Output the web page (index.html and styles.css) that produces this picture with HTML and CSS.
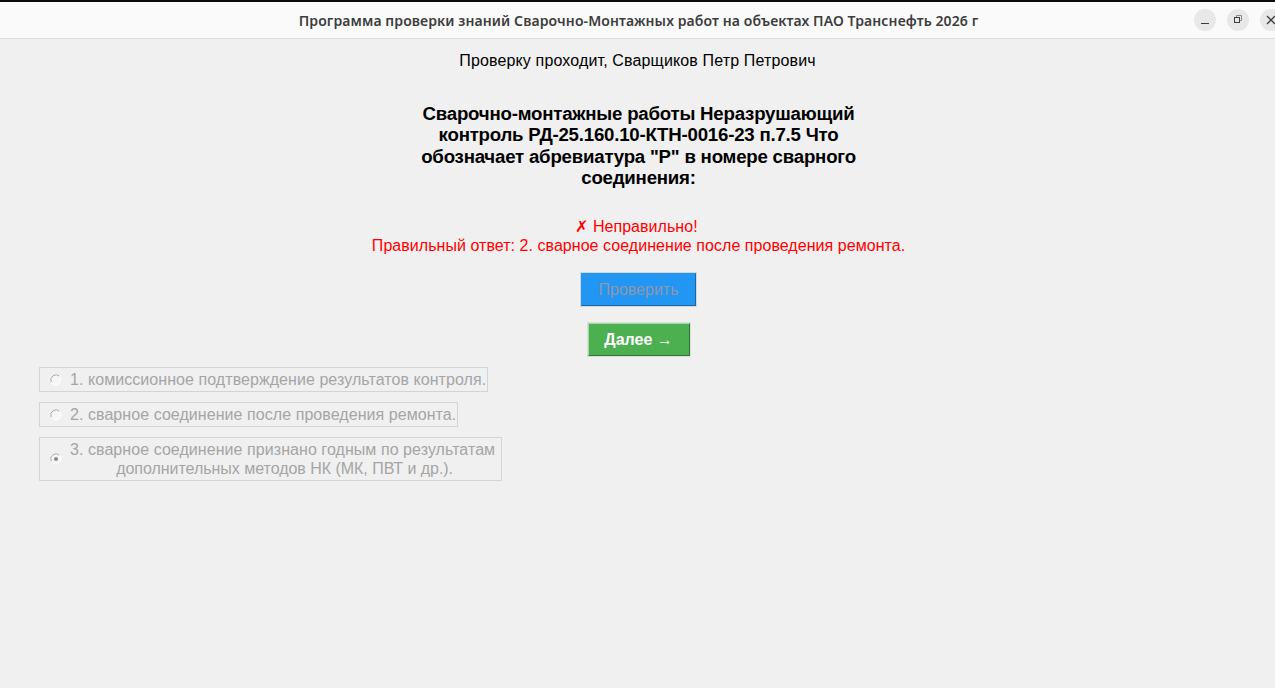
FILE: index.html
```html
<!DOCTYPE html>
<html lang="ru">
<head>
<meta charset="utf-8">
<title>Программа проверки знаний</title>
<link rel="stylesheet" href="styles.css">
</head>
<body>
<div class="window">
  <header class="titlebar">
    <div class="title">Программа проверки знаний Сварочно-Монтажных работ на объектах ПАО Транснефть 2026 г</div>
    <div class="controls">
      <span class="ctl"><svg width="24" height="24" viewBox="0 0 24 24"><path d="M8 15.5h8" stroke="#3d3d3d" stroke-width="1" fill="none"/></svg></span>
      <span class="ctl"><svg width="24" height="24" viewBox="0 0 24 24"><path d="M10.5 9V7.5h5v5H14" stroke="#8a8a8a" stroke-width="1" fill="none"/><rect x="8.5" y="9.5" width="5" height="5" stroke="#3d3d3d" stroke-width="1" fill="none"/></svg></span>
      <span class="ctl"><svg width="24" height="24" viewBox="0 0 24 24"><path d="M8 8l8 8M16 8l-8 8" stroke="#3d3d3d" stroke-width="1.3" fill="none"/></svg></span>
    </div>
  </header>
  <main class="content">
    <div class="user">Проверку проходит, Сварщиков Петр Петрович</div>
    <h1 class="question">Сварочно-монтажные работы Неразрушающий контроль РД-25.160.10-КТН-0016-23 п.7.5 Что обозначает абревиатура "Р" в номере сварного соединения:</h1>
    <div class="result"><span class="verdict">✗ Неправильно!</span>Правильный ответ: 2. сварное соединение после проведения ремонта.</div>
    <button class="btn btn-check" disabled>Проверить</button>
    <button class="btn btn-next">Далее →</button>
    <div class="options">
      <label class="option">
        <svg class="radio" width="12" height="12" viewBox="0 0 12 12"><circle cx="6" cy="6" r="5.5" fill="#f6f6f6"/><path d="M1.2 8A5.2 5.2 0 0 1 9.5 2.2" stroke="#a9a9a9" fill="none"/><path d="M9.5 2.2A5.2 5.2 0 0 1 2.5 9.8" stroke="#ffffff" fill="none"/></svg>
        <span>1. комиссионное подтверждение результатов контроля.</span>
      </label>
      <label class="option">
        <svg class="radio" width="12" height="12" viewBox="0 0 12 12"><circle cx="6" cy="6" r="5.5" fill="#f6f6f6"/><path d="M1.2 8A5.2 5.2 0 0 1 9.5 2.2" stroke="#a9a9a9" fill="none"/><path d="M9.5 2.2A5.2 5.2 0 0 1 2.5 9.8" stroke="#ffffff" fill="none"/></svg>
        <span>2. сварное соединение после проведения ремонта.</span>
      </label>
      <label class="option option-wide">
        <svg class="radio" width="12" height="12" viewBox="0 0 12 12"><circle cx="6" cy="6" r="5.5" fill="#f6f6f6"/><path d="M1.2 8A5.2 5.2 0 0 1 9.5 2.2" stroke="#a9a9a9" fill="none"/><path d="M9.5 2.2A5.2 5.2 0 0 1 2.5 9.8" stroke="#ffffff" fill="none"/><circle cx="6" cy="6" r="2" fill="#8a8a8a"/></svg>
        <span>3. сварное соединение признано годным по результатам<span class="line-two">дополнительных методов НК (МК, ПВТ и др.).</span></span>
      </label>
    </div>
  </main>
</div>
</body>
</html>
```
FILE: styles.css
```css
* { box-sizing: border-box; }
html, body { margin: 0; height: 100%; overflow: hidden; }
body { font-family: "Liberation Sans", Arial, sans-serif; font-size: 16px; background: #f0f0f0; color: #000; }
.window { height: 688px; display: flex; flex-direction: column; }
.titlebar {
  height: 39px; flex: none; display: flex; align-items: center; justify-content: center; position: relative;
  background: #fafafa; border-top: 2px solid #0c0c0c; border-bottom: 1px solid #dcdcdc; padding-left: 2px;
}
.title { font-family: "Noto Sans", sans-serif; font-weight: 600; font-size: 14px; letter-spacing: 0.1px; color: #3d3d3d; white-space: nowrap; }
.controls { position: absolute; left: 1194px; top: 7px; display: flex; gap: 11px; }
.ctl { width: 22px; height: 22px; border-radius: 50%; background: #e8e8e8; display: flex; align-items: center; justify-content: center; flex: none; }
.ctl svg { flex: none; }
.content { display: flex; flex-direction: column; align-items: center; flex: 1; padding-left: 2px; }
.user { margin: 12px 2px 0 0; height: 19px; line-height: 19px; letter-spacing: 0.14px; }
.question { width: 470px; margin: 33px 0 0; padding: 0 16px; font-size: 18.67px; line-height: 21.33px; font-weight: 700; text-align: center; letter-spacing: -0.22px; }
.result { margin-top: 29px; color: #ff0000; text-align: center; line-height: 19px; height: 38px; letter-spacing: 0.045px; }
.verdict { display: block; padding-right: 4px; }
.btn { display: block; font-family: inherit; font-size: 16px; padding: 0; flex: none; }
.btn-check { margin-top: 18px; width: 115px; height: 33px; background: #2196f3; color: #8f98ab; box-shadow: 0 0 0 1px #d6d6d6; border: 1px solid; border-color: #2196f3 #1769aa #1769aa #2196f3; }
.btn-next { margin-top: 17px; width: 102px; height: 33px; background: #4caf50; color: #fff; font-weight: 700; border: 1px solid; border-color: #a3dca5 #2c7a30 #2c7a30 #a3dca5; box-shadow: 0 0 0 1px #dcdcdc; }
.options { align-self: flex-start; margin: 11px 0 0 37px; display: flex; flex-direction: column; align-items: flex-start; gap: 10px; letter-spacing: 0.06px; }
.option { display: flex; align-items: center; border: 1px solid #d4d4d4; padding: 2px 1px 2px 10px; color: #a5a5a5; text-align: center; line-height: 19px; }
.option-wide { padding-right: 6px; }
.radio { margin-right: 8px; flex: none; }
.line-two { display: block; padding-left: 4px; letter-spacing: -0.03px; }
```
